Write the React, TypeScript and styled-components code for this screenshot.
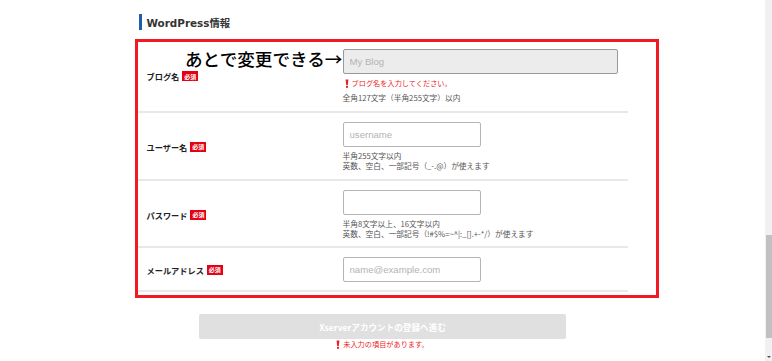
import React from "react";
import styled, { createGlobalStyle } from "styled-components";

const Global = createGlobalStyle`
  html, body { margin: 0; padding: 0; background: #fff; }
  body { font-family: "Noto Sans CJK JP", "Noto Sans", sans-serif; color: #333; }
`;

const Page = styled.div`
  display: flex;
  width: 772px;
  height: 361px;
  overflow: hidden;
`;

const Main = styled.div`
  position: relative;
  flex: 1;
  display: flex;
  justify-content: center;
`;

const Column = styled.div`
  width: 490px;
  padding-top: 14px;
  display: flex;
  flex-direction: column;
`;

const SectionTitle = styled.h2`
  margin: 0 0 0 1px;
  height: 16px;
  display: flex;
  align-items: center;
  gap: 5px;
  font-family: "DejaVu Sans", "Noto Sans CJK JP", sans-serif;
  font-size: 10.4px;
  font-weight: 700;
  color: #333;
  &::before {
    content: "";
    width: 3px;
    height: 16px;
    background: #1d5fae;
  }
`;

const Table = styled.div`
  margin-top: 9px;
  display: flex;
  flex-direction: column;
`;

const Row = styled.div<{ $pt: number; $pb: number }>`
  display: grid;
  grid-template-columns: 205px 1fr;
  align-items: center;
  padding: ${(p) => `${p.$pt}px 0 ${p.$pb}px`};
  border-bottom: 2px solid #e8e8e8;
`;

const Label = styled.div`
  display: flex;
  align-items: center;
  gap: 3px;
  padding-left: 9px;
  font-size: 8.2px;
  font-weight: 700;
  color: #222;
`;

const Badge = styled.span`
  display: inline-flex;
  align-items: center;
  justify-content: center;
  width: 16px;
  height: 10px;
  background: #e50012;
  color: #fff;
  font-size: 6px;
  font-weight: 700;
`;

const Field = styled.div`
  display: flex;
  flex-direction: column;
`;

const Input = styled.input<{ $w: number; $filled?: boolean }>`
  box-sizing: border-box;
  width: ${(p) => p.$w}px;
  height: 25px;
  padding: 0 6px;
  border: 1px solid ${(p) => (p.$filled ? "#999" : "#b5b5b5")};
  border-radius: 2px;
  background: ${(p) => (p.$filled ? "#ececec" : "#fff")};
  font-family: "Liberation Sans", Arial, sans-serif;
  font-size: 9.6px;
  outline: none;
  &::placeholder { color: #b3b3b3; }
`;

const ErrorLine = styled.div<{ $mt?: number; $pl?: number }>`
  display: flex;
  align-items: center;
  gap: 3px;
  margin-top: ${(p) => p.$mt ?? 0}px;
  padding-left: ${(p) => p.$pl ?? 0}px;
  color: #ee1b24;
  font-size: 7.2px;
  line-height: 11px;
  white-space: nowrap;
`;

const ErrorMark = () => (
  <svg width="4" height="9" viewBox="0 0 4 9">
    <path d="M0.6 0.5h2.8L2.8 6H1.2z" fill="#ee1b24" />
    <rect x="1" y="6.8" width="2" height="2" fill="#ee1b24" />
  </svg>
);

const Hint = styled.div`
  font-size: 7.7px;
  line-height: 10px;
  color: #555;
  white-space: nowrap;
`;

const Hints = styled.div<{ $mt: number }>`
  margin-top: ${(p) => p.$mt}px;
  display: flex;
  flex-direction: column;
`;

const Footer = styled.div`
  margin-top: 22px;
  display: flex;
  flex-direction: column;
  align-items: center;
  gap: 0px;
`;

const Submit = styled.button`
  width: 367px;
  height: 25px;
  border: none;
  border-radius: 2px;
  background: #e0e0e0;
  color: #fff;
  font-family: "Noto Sans CJK JP", sans-serif;
  font-size: 8.6px;
  font-weight: 700;
`;

const Annotation = styled.div`
  position: absolute;
  left: 185px;
  top: 48px;
  font-size: 17.6px;
  line-height: 1.2;
  font-weight: 500;
  color: #000;
  white-space: nowrap;
`;

const RedFrame = styled.div`
  position: absolute;
  left: 135px;
  top: 39px;
  width: 524px;
  height: 259px;
  box-sizing: border-box;
  border: 3px solid #ef1a24;
  pointer-events: none;
`;

const Scrollbar = styled.div`
  width: 7px;
  background: #f1f1f1;
  display: flex;
  flex-direction: column;
  align-items: flex-end;
`;

const Thumb = styled.div`
  margin-top: 235px;
  width: 6px;
  height: 103px;
  background: #c1c1c1;
`;

const ArrowDown = styled.div`
  margin: auto auto 3px;
  width: 0;
  height: 0;
  border-left: 2px solid transparent;
  border-right: 2px solid transparent;
  border-top: 2px solid #505050;
`;

export default function App() {
  return (
    <>
      <Global />
      <Page>
        <Main>
          <Column>
            <SectionTitle>WordPress情報</SectionTitle>
            <Table>
              <Row $pt={10} $pb={8}>
                <Label>
                  ブログ名<Badge>必須</Badge>
                </Label>
                <Field>
                  <Input $w={275} $filled placeholder="My Blog" />
                  <ErrorLine $mt={4} $pl={2}>
                    <ErrorMark />
                    ブログ名を入力してください。
                  </ErrorLine>
                  <Hints $mt={4}>
                    <Hint>全角127文字（半角255文字）以内</Hint>
                  </Hints>
                </Field>
              </Row>
              <Row $pt={9} $pb={8}>
                <Label>
                  ユーザー名<Badge>必須</Badge>
                </Label>
                <Field>
                  <Input $w={138} placeholder="username" />
                  <Hints $mt={4}>
                    <Hint>半角255文字以内</Hint>
                    <Hint>英数、空白、一部記号（_-.@）が使えます</Hint>
                  </Hints>
                </Field>
              </Row>
              <Row $pt={9} $pb={7}>
                <Label>
                  パスワード<Badge>必須</Badge>
                </Label>
                <Field>
                  <Input $w={138} type="password" />
                  <Hints $mt={4}>
                    <Hint>半角8文字以上、16文字以内</Hint>
                    <Hint>英数、空白、一部記号（!#$%=~^|:_[].+-*/）が使えます</Hint>
                  </Hints>
                </Field>
              </Row>
              <Row $pt={9} $pb={8}>
                <Label>
                  メールアドレス<Badge>必須</Badge>
                </Label>
                <Field>
                  <Input $w={138} placeholder="name@example.com" />
                </Field>
              </Row>
            </Table>
            <Footer>
              <Submit type="button">Xserverアカウントの登録へ進む</Submit>
              <ErrorLine>
                <ErrorMark />
                未入力の項目があります。
              </ErrorLine>
            </Footer>
          </Column>
          <RedFrame />
          <Annotation>あとで変更できる→</Annotation>
        </Main>
        <Scrollbar>
          <Thumb />
          <ArrowDown />
        </Scrollbar>
      </Page>
    </>
  );
}
